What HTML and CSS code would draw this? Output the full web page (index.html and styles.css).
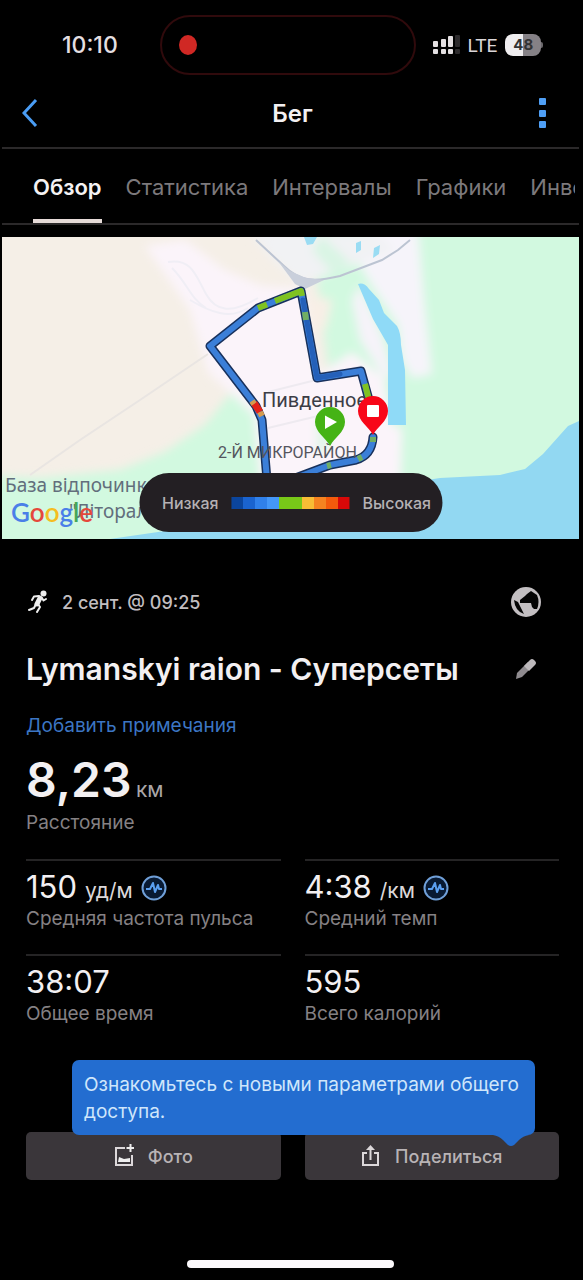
FILE: index.html
```html
<!DOCTYPE html>
<html lang="ru">
<head>
<meta charset="utf-8">
<meta name="viewport" content="width=device-width, initial-scale=1">
<title>Бег</title>
<link rel="stylesheet" href="styles.css">
</head>
<body>
<div class="app">
  <div class="status">
    <time class="status-time">10:10</time>
    <div class="island"><span class="rec"></span></div>
    <div class="status-right">
      <svg class="signal" viewBox="0 0 27 20" aria-hidden="true">
        <g fill="#e4e0e2"><rect x="0" y="6" width="5" height="6" rx="1"/><rect x="8" y="4" width="5" height="8" rx="1"/><rect x="15" y="1" width="5" height="11" rx="1"/><rect x="0" y="14" width="5" height="5" rx="1"/><rect x="8" y="14" width="5" height="5" rx="1"/><rect x="15" y="14" width="5" height="5" rx="1"/></g>
        <g fill="#2c2a2c"><rect x="22" y="0" width="5" height="12" rx="1"/><rect x="22" y="14" width="5" height="5" rx="1"/></g>
      </svg>
      <span class="lte">LTE</span>
      <span class="battery">48</span>
    </div>
  </div>

  <header class="bar">
    <button class="icon-btn" aria-label="Назад">
      <svg width="16" height="30" viewBox="0 0 16 30"><path d="M14 2 2 15l12 13" fill="none" stroke="#4a9df5" stroke-width="3"/></svg>
    </button>
    <h1 class="bar-title">Бег</h1>
    <button class="icon-btn" aria-label="Меню">
      <svg width="8" height="32" viewBox="0 0 8 32" fill="#4f9ff5"><rect x="0" y="1" width="7" height="7" rx="1"/><rect x="0" y="13" width="7" height="7" rx="1"/><rect x="0" y="24" width="7" height="7" rx="1"/></svg>
    </button>
  </header>

  <nav class="tabs">
    <div class="tab-strip">
      <a class="tab tab-active" href="#overview">Обзор</a>
      <a class="tab" href="#stats">Статистика</a>
      <a class="tab" href="#laps">Интервалы</a>
      <a class="tab" href="#charts">Графики</a>
      <a class="tab" href="#gear">Инвентарь</a>
    </div>
  </nav>

  <section class="map">
    <svg class="map-svg" viewBox="2 237 577 302" role="img" aria-label="Карта маршрута">
      <defs>
        <filter id="soft" x="-20%" y="-20%" width="140%" height="140%"><feGaussianBlur stdDeviation="5"/></filter>
      </defs>
      <rect x="2" y="237" width="577" height="302" fill="#f5efe7"/>
      <g filter="url(#soft)">
        <path d="M310 225H590V550H-10V476L40 478 120 470 165 452 205 425 235 388 262 410 330 380Z" fill="#d2f9e0"/>
        <path d="M145 246 185 240 225 270 262 286 302 288 318 375 352 352 384 378 392 425 402 428 400 500H262L254 415 208 372 190 310Z" fill="#fbf4fa"/>
        <path d="M368 228H418L424 300 432 374 412 378 402 360 398 325 375 290 358 262Z" fill="#f6f4fa"/>
        <path d="M250 232H375L395 250 340 270 300 284 272 258Z" fill="#f1f2f4"/>
        <path d="M322 236 350 262 335 276 312 250Z" fill="#d9f5e4"/>
        <path d="M306 295 332 300 326 328 312 334Z" fill="#f8efe6"/>
        <path d="M360 285 382 335 392 372 385 380 360 340 352 300Z" fill="#f6f3f9"/>
        <path d="M317 420h12v32h-12z" fill="#dff5e7"/>
      </g>
      <g fill="none" stroke="#e9e5e2" stroke-width="2">
        <path d="M30 475 80 440 140 400 208 354"/>
        <path d="M168 262c24-4 28 14 38 32s26 20 52 4M190 300c20 12 40 20 58 8M172 268c16 16 18 30 34 40" stroke="#f0eef5"/>
        <path d="M268 392 320 379M268 428l50-12M322 376l40-10M312 345v30" stroke="#eeeaf0"/>
      </g>
      <path d="M256 240 284 266C300 282 315 282 340 276L382 260 398 250 410 240" fill="none" stroke="#bcc4d2" stroke-width="2"/>
      <path d="M278 261 290 271 306 278 324 280 305 289 295 284Z" fill="#c9cfdb"/>
      <g fill="#9adcf3">
        <path d="M304 237h13l-4 7-6 1zM356 243l5-2v9l-5 3zM374 248l6-3-1 9-6 4z"/>
        <path d="M358 284Q364 282 369 289L379 300 384 313 397 326Q401 333 401 345L405 370 406 425H388L388 345 373 319Z" fill="#8fdaf7"/>
      </g>
      <path d="M110 539 165 531 300 500 440 478 500 475 525 469 543 454 568 426 579 421V539Z" fill="#92d8f2"/>
      <text class="map-place" x="5" y="492">База відпочинк</text>
      <text class="map-place" x="69" y="518">"Літорал</text>

      <g fill="none" stroke-linejoin="round" stroke-linecap="round">
        <path d="M290 480 330 465 356 460Q372 455 373 437M369 400 361 371 317 378 301 291 258 308 210 346 256 406 262 420 267 480" stroke="#18315c" stroke-width="9"/>
        <path d="M290 480 330 465 356 460Q372 455 373 437M369 400 361 371 317 378 301 291 258 308 210 346 256 406 262 420 267 480" stroke="#3b7fd8" stroke-width="6"/>
        <path d="M303 300 317 378 340 374" stroke="#2460b9" stroke-width="5"/>
        <g stroke-linecap="butt" stroke-width="6">
          <path d="M258 308 267 304.500M275 301 301 291 302 296M365 384 369 400" stroke="#7fc221"/>
          <path d="M305 312 306 320M327 466 331 465M358 459 362 457M373 437v5" stroke="#71ae63"/>
          <path d="M254 403 260 412" stroke="#e32218" stroke-width="7"/>
          <path d="M252 401 254 404M260 412 262 416" stroke="#d49b4e"/>
        </g>
      </g>
      <text class="map-town" x="262" y="407">Пивденное</text>
      <text class="map-district" x="218" y="458">2-Й МИКРОРАЙОН</text>
      <path d="M330 446C326 438 315 432 315 422A15 15 0 0 1 345 422C345 432 334 438 330 446Z" fill="#45b315"/>
      <path d="M325 415.500 337 422 325 429Z" fill="#fff"/>
      <path d="M373 435C369 427 358 421 358 411A15 15 0 0 1 388 411C388 421 377 427 373 435Z" fill="#f80719"/>
      <rect x="367" y="405" width="12" height="12" rx="1" fill="#fff"/>
      <text class="map-google" x="11" y="522"><tspan fill="#4a7fe8">G</tspan><tspan fill="#e5483b">o</tspan><tspan fill="#f5bd20">o</tspan><tspan fill="#4a7fe8">g</tspan><tspan fill="#46a758">l</tspan><tspan fill="#e5483b">e</tspan></text>
    </svg>
    <div class="legend">
      <span>Низкая</span>
      <span class="scale"></span>
      <span>Высокая</span>
    </div>
  </section>

  <main class="content">
    <div class="meta">
      <svg width="20" height="24" viewBox="0 0 20 24" fill="none" stroke="#eee" stroke-width="3" stroke-linecap="round" stroke-linejoin="round"><circle cx="15.500" cy="3.500" r="3" fill="#eee" stroke="none"/><path d="M12 8 9 14" stroke-width="5"/><path d="M11 6 6 6.500 4 10M14 8l1.500 2.500L18 9" stroke-width="2"/><path d="M8 14 6 18 1 20M10 14l2 3-3 5" stroke-width="2"/></svg>
      <span class="meta-date">2 сент. @ 09:25</span>
      <button class="icon-btn" aria-label="Доступно всем">
        <svg width="32" height="32" viewBox="0 0 32 32"><circle cx="16" cy="16" r="15" fill="#c3bfc2"/><path d="M4 14 8 16 14 28Q5 25 4 14ZM10 14 15 10 17 8 21 5 27 9Q30 16 27 23L24 23 22 21 21 17H10Z" fill="#050505"/></svg>
      </button>
    </div>
    <div class="title-row">
      <h2 class="title">Lymanskyi raion - Суперсеты</h2>
      <button class="icon-btn" aria-label="Изменить">
        <svg width="22" height="22" viewBox="0 0 22 22"><path d="M1 21 2 15 13 4 18 8 7 19Z" fill="#8f8b8f"/><path d="M9 8 15 2Q17 0 19 2L20 3Q22 5 20 7L14 13Z" fill="#bdb9bc"/></svg>
      </button>
    </div>
    <a class="notes" href="#notes">Добавить примечания</a>
    <div class="distance"><span class="distance-num">8,23</span> <span class="distance-unit">км</span></div>
    <div class="label">Расстояние</div>

    <div class="grid">
      <div class="cell">
        <div class="value">150 <span class="unit">уд/м</span>
          <svg class="pulse" viewBox="0 0 26 26"><circle cx="13" cy="13" r="11.500" fill="#081a33" stroke="#6f9fd8" stroke-width="2"/><path d="M5 14H9L12 8 14 17 17 10 18 14H21" fill="none" stroke="#5a9ff0" stroke-width="2" stroke-linejoin="round"/></svg>
        </div>
        <div class="label">Средняя частота пульса</div>
      </div>
      <div class="cell">
        <div class="value">4:38 <span class="unit">/км</span>
          <svg class="pulse" viewBox="0 0 26 26"><circle cx="13" cy="13" r="11.500" fill="#081a33" stroke="#6f9fd8" stroke-width="2"/><path d="M5 14H9L12 8 14 17 17 10 18 14H21" fill="none" stroke="#5a9ff0" stroke-width="2" stroke-linejoin="round"/></svg>
        </div>
        <div class="label">Средний темп</div>
      </div>
      <div class="cell">
        <div class="value">38:07</div>
        <div class="label">Общее время</div>
      </div>
      <div class="cell">
        <div class="value">595</div>
        <div class="label">Всего калорий</div>
      </div>
    </div>

    <div class="actions">
      <button class="action">
        <svg width="20" height="24" viewBox="0 0 20 24"><path d="M11 4H2V21H18V11" fill="none" stroke="#dcd8da" stroke-width="2"/><path d="M4 18 5 13 10 15 16 14V18Z" fill="#eee"/><path d="M16.500 0V8M12.500 4H20" stroke="#eee" stroke-width="2"/></svg>
        Фото
      </button>
      <button class="action">
        <svg width="20" height="24" viewBox="0 0 20 24" fill="none" stroke="#dcd8da" stroke-width="2"><path d="M6 9H2V21H17V9H13M9.500 16V4"/><path d="M5 6 9.500 1 14 6Z" fill="#dcd8da" stroke="none"/></svg>
        Поделиться
      </button>
      <div class="tip" role="tooltip">Ознакомьтесь с новыми параметрами общего доступа.
        <svg class="tip-arrow" width="36" height="12" viewBox="0 0 36 12"><path d="M0 0H36Q30 1 26 5L21 10Q18 12 15 10L10 5Q6 1 0 0Z" fill="#236dd0"/></svg>
      </div>
    </div>
  </main>
  <div class="home"></div>
</div>
</body>
</html>
```

FILE: styles.css
```css
* { box-sizing: border-box; }

body {
  margin: 0;
  background: #000;
  color: #f3f0f2;
  font-family: Inter, "Noto Sans", sans-serif;
}

h1, h2 { margin: 0; }

button {
  border: 0;
  padding: 0;
  background: none;
  color: inherit;
  font: inherit;
}

a { text-decoration: none; }

.app {
  display: flex;
  flex-direction: column;
  min-height: 100vh;
  padding: 0 4px 0 2px;
}

/* status bar */
.status {
  display: grid;
  grid-template-columns: 1fr 256px 1fr;
  align-items: center;
  padding: 15px 6px 6px 0;
}
.status-time {
  padding-left: 60px;
  font-size: 23px;
  font-weight: 500;
  color: #e4dfe1;
}
.island {
  display: flex;
  align-items: center;
  height: 60px;
  padding-left: 17px;
  border: 2px solid #300a0c;
  border-radius: 30px;
}
.rec {
  width: 18px;
  height: 20px;
  border-radius: 50%;
  background: #d02824;
}
.status-right {
  display: flex;
  align-items: center;
  gap: 8px;
  padding-left: 17px;
}
.signal { flex: none; width: 27px; height: 20px; }
.lte {
  font-family: Roboto, sans-serif;
  font-size: 19px;
  color: #dad6d8;
}
.battery {
  position: relative;
  flex: none;
  width: 36px;
  border-radius: 8px;
  background: linear-gradient(90deg, #efedef 50%, #858186 50%);
  color: #333;
  font-size: 15px;
  font-weight: 700;
  line-height: 22px;
  text-align: center;
}
.battery::after {
  content: "";
  position: absolute;
  top: 8px;
  left: 100%;
  width: 2px;
  height: 6px;
  border-radius: 0 2px 2px 0;
  background: #6a676b;
}

/* title bar */
.bar {
  display: flex;
  align-items: center;
  height: 68px;
  padding: 0 32px 2px 20px;
  border-bottom: 2px solid #2b292a;
}
.icon-btn { display: flex; flex: none; }
.bar-title {
  flex: 1;
  padding-left: 8px;
  font-size: 24px;
  font-weight: 600;
  text-align: center;
}

/* tabs */
.tabs {
  margin-bottom: 12px;
  padding: 0 4px 0 31px;
  border-bottom: 2px solid #2b292a;
}
.tab-strip {
  display: flex;
  gap: 24px;
  height: 74px;
  overflow: hidden;
}
.tab {
  flex: none;
  border-bottom: 4px solid transparent;
  color: #7c797c;
  font-size: 22px;
  line-height: 76px;
}
.tab-active {
  border-color: #e6dbd8;
  color: #f5f2f3;
  font-weight: 600;
}

/* map */
.map { position: relative; }
.map-svg { display: block; width: 100%; height: auto; }
.map-place { fill: #626e7c; font: 19px "Noto Sans", sans-serif; }
.map-town { fill: #3b3d46; font: 20px Roboto, sans-serif; }
.map-district { fill: #54555e; font: 16px Roboto, sans-serif; }
.map-google { font: 600 26px Lato, sans-serif; }
.legend {
  position: absolute;
  bottom: 7px;
  left: 50%;
  transform: translateX(-50%);
  display: flex;
  align-items: center;
  gap: 13px;
  height: 59px;
  padding: 0 11px 0 23px;
  border-radius: 30px;
  background: #231f23;
  color: #b5b1b4;
  font-size: 16px;
  font-weight: 500;
  white-space: nowrap;
}
.scale {
  width: 118px;
  height: 12px;
  background: linear-gradient(90deg,
    #0b459d 10%, #1a63cf 10% 20%, #3080ea 20% 30%, #4497f8 30% 40%,
    #78c818 40% 60%, #f8bd35 60% 70%, #f58320 70% 80%, #f35a0c 80% 90%, #d80808 90%);
}

/* summary */
.content {
  display: flex;
  flex-direction: column;
  padding: 47px 20px 0 24px;
}
.meta {
  display: flex;
  align-items: center;
  gap: 14px;
  padding: 0 17px 0 2px;
}
.meta-date {
  flex: 1;
  color: #c2bec0;
  font-size: 18px;
  font-weight: 500;
}
.title-row {
  display: flex;
  align-items: center;
  justify-content: space-between;
  margin-top: 32px;
  padding-right: 22px;
}
.title {
  font-size: 30px;
  font-weight: 600;
  line-height: 38px;
}
.notes {
  margin-top: 24px;
  color: #3c76c4;
  font-size: 19px;
  line-height: 28px;
}
.distance {
  margin-top: 20px;
  line-height: 40px;
}
.distance-num { font-size: 48px; font-weight: 600; }
.distance-unit { color: #aaa6a8; font-size: 21px; }
.label {
  color: #858184;
  font-size: 19px;
  line-height: 24px;
}
.grid {
  display: grid;
  grid-template-columns: 1fr 1fr;
  column-gap: 24px;
  margin-top: 24px;
}
.cell {
  height: 95px;
  padding-top: 8px;
  border-top: 2px solid #252425;
}
.value {
  display: flex;
  align-items: baseline;
  gap: 8px;
  height: 38px;
  font-size: 31px;
  line-height: 36px;
}
.unit { color: #dcd8da; font-size: 21px; }
.pulse { width: 26px; height: 26px; align-self: center; }

/* actions */
.actions {
  position: relative;
  display: grid;
  grid-template-columns: 1fr 1fr;
  gap: 24px;
  margin-top: 83px;
}
.action {
  display: flex;
  align-items: center;
  justify-content: center;
  gap: 14px;
  height: 48px;
  border-radius: 5px;
  background: #3a363a;
  color: #b8b3b5;
  font-size: 18px;
  font-weight: 500;
}
.tip {
  position: absolute;
  right: 24px;
  bottom: 45px;
  left: 46px;
  padding: 11px 12px 10px;
  border-radius: 7px;
  background: #236dd0;
  color: #cfe6fb;
  font-size: 19px;
  line-height: 27px;
}
.tip-arrow {
  position: absolute;
  top: 100%;
  right: 6px;
}

.home {
  width: 36%;
  height: 8px;
  margin: auto auto 12px;
  border-radius: 4px;
  background: #fbf8fb;
}
```
